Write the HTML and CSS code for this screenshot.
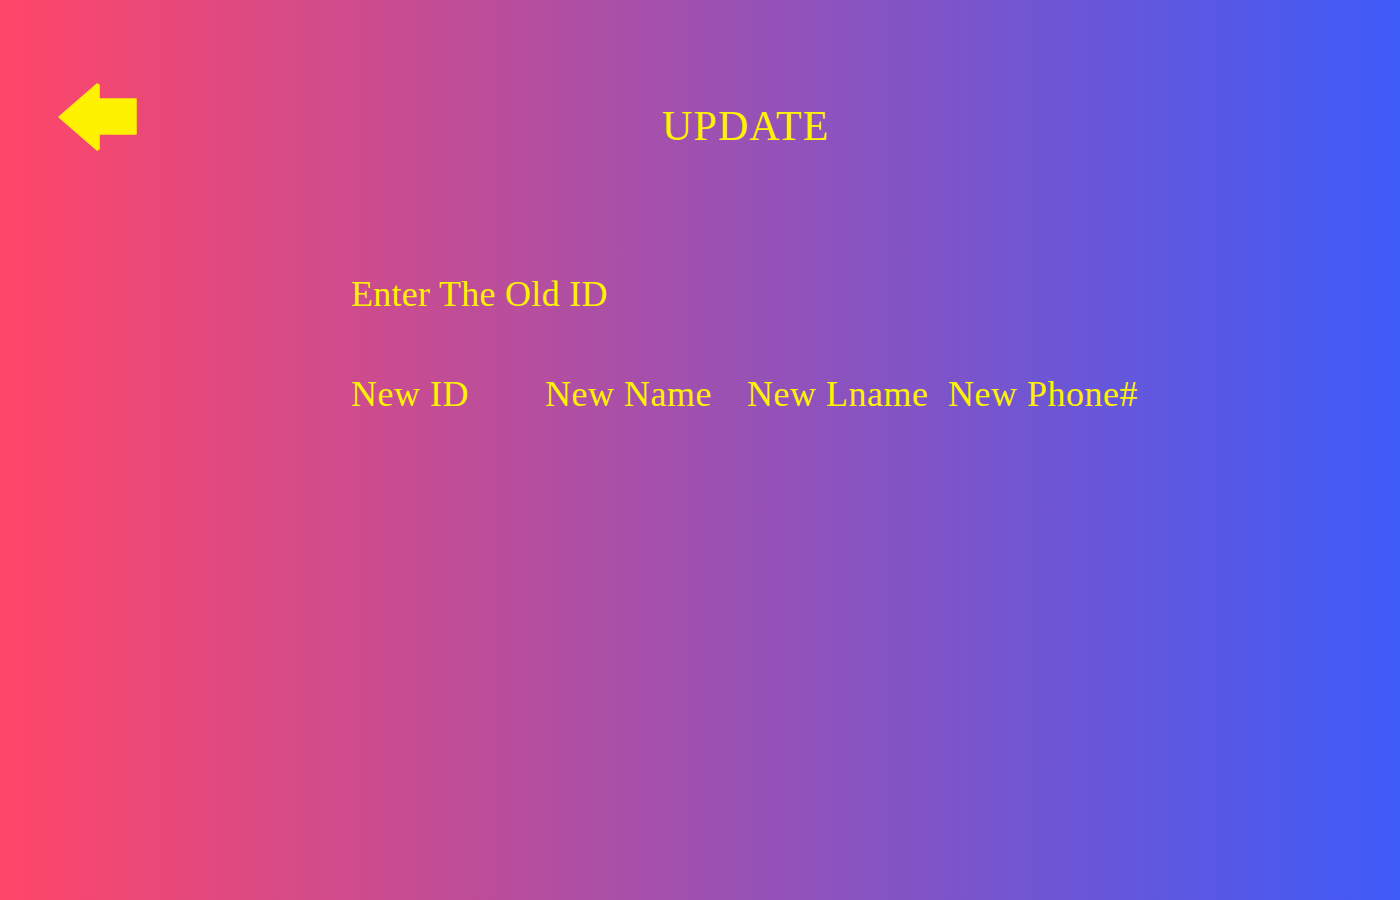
FILE: index.html
```html
<!DOCTYPE html>
<html>
<head>
<meta charset="utf-8">
<title>Update</title>
<link rel="stylesheet" href="styles.css">
</head>
<body>
<div class="page">
  <header class="header">
    <a class="back" href="#" aria-label="Back">
      <svg width="80" height="70" viewBox="0 0 80 70">
        <polygon points="1,35 39,2 41,3 41,17 78,17 78,52 41,52 41,67 39,68" fill="#fff200" stroke="#fff200" stroke-width="1.5" stroke-linejoin="round"/>
      </svg>
    </a>
    <h1 class="title">UPDATE</h1>
  </header>
  <section class="form">
    <div class="old-id">Enter The Old ID</div>
    <div class="fields">
      <span class="field f-id">New ID</span>
      <span class="field f-name">New Name</span>
      <span class="field f-lname">New Lname</span>
      <span class="field f-phone">New Phone#</span>
    </div>
  </section>
</div>
</body>
</html>
```
FILE: styles.css
```css
html, body {
  margin: 0;
  padding: 0;
  height: 100%;
}
body {
  background: linear-gradient(to right, #ff4668 0%, #3e5bf8 100%);
  font-family: "Liberation Serif", "Times New Roman", serif;
  color: #fff200;
}
.page {
  width: 1400px;
  height: 900px;
}
.header {
  display: flex;
  align-items: flex-start;
  padding: 82px 0 0 58px;
}
.back {
  display: block;
  width: 80px;
  height: 70px;
}
.back svg {
  display: block;
}
.title {
  margin: 20px 0 0 524px;
  font-size: 42px;
  line-height: 48px;
  letter-spacing: 1.1px;
  font-weight: normal;
}
.form {
  padding-left: 351px;
  margin-top: 122px;
}
.old-id {
  font-size: 36px;
  line-height: 41px;
  letter-spacing: 0.28px;
}
.fields {
  display: flex;
  margin-top: 59px;
  font-size: 36px;
  line-height: 41px;
  letter-spacing: 0.5px;
}
.field {
  white-space: nowrap;
}
.f-id { width: 194px; }
.f-name { width: 202px; }
.f-lname { width: 201px; }
```
